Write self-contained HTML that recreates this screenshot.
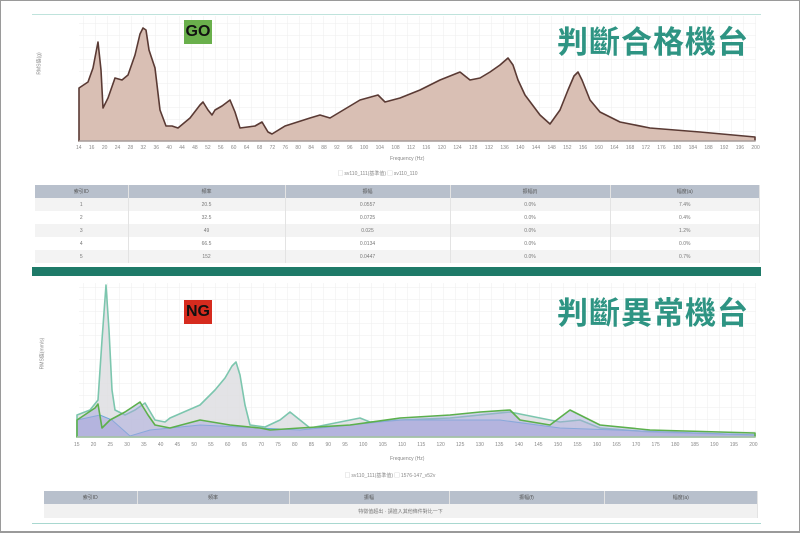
<!DOCTYPE html>
<html><head><meta charset="utf-8"><style>
*{margin:0;padding:0;box-sizing:border-box}
body{width:800px;height:533px;background:#fff;position:relative;overflow:hidden;font-family:"Liberation Sans","Noto Sans CJK TC",sans-serif}
.frame{position:absolute;left:0;top:0;width:800px;height:533px;border:1px solid #9a9a9a;border-bottom-width:2px}
.a{position:absolute}
.t{font-size:5px;color:#888;position:absolute;white-space:nowrap}
.ax{position:absolute;display:flex;justify-content:space-between;font-size:5px;color:#888}
.title{position:absolute;font-family:"Noto Sans CJK TC","WenQuanYi Zen Hei",sans-serif;font-weight:bold;color:#2e9483;font-size:31px;letter-spacing:1px;line-height:1}
.badge{position:absolute;width:28px;height:24px;font-weight:bold;font-size:16px;color:#111;text-align:center;line-height:24px}
table{position:absolute;border-collapse:collapse;font-size:5px;color:#777;text-align:center}
td,th{height:13px;font-weight:normal;border-right:1px solid #e3e3e3}
th{background:#b8c0cc;color:#555}
tr:nth-child(even) td{background:#f3f3f3}
</style></head><body>
<div class="a" style="left:32px;top:14px;width:729px;height:1px;background:#bfe3dc"></div>
<svg class="a" style="left:0;top:0" width="800" height="533">
<defs>
<pattern id="g" width="12" height="12" patternUnits="userSpaceOnUse"><path d="M12 0V12M0 12H12" stroke="#eeeeee" stroke-width="1" fill="none"/></pattern>
</defs>
<rect x="79" y="16" width="677" height="125" fill="url(#g)"/>
<path d="M79 88L88 82L93 68L98 42L101 70L103 108L108 98L115 78L122 80L128 75L135 55L140 34L143 28L146 30L149 50L155 68L160 110L166 126L172 126L178 128L190 118L200 105L203 102L208 110L212 115L215 110L222 106L230 100L235 112L240 128L255 126L262 122L268 132L272 134L285 126L310 118L320 115L330 118L360 100L378 95L385 102L400 98L420 90L440 80L460 72L470 80L480 78L490 72L500 65L508 58L513 65L518 80L525 95L540 115L550 124L560 110L568 90L574 76L578 72L582 80L590 100L600 112L620 122L650 128L700 132L755 137L755 141L79 141Z" fill="#d9bfb4" stroke="#5a3a34" stroke-width="1.6" stroke-linejoin="round"/>
<line x1="79" y1="141" x2="756" y2="141" stroke="#ccc"/>
<rect x="79" y="283" width="677" height="154" fill="url(#g)"/>
<path d="M77 415L90 410L98 400L102 340L106 285L109 330L112 390L115 410L125 415L135 410L145 403L155 420L165 422L170 418L200 405L215 390L225 378L232 366L236 362L240 375L245 405L250 425L265 427L280 420L290 412L300 420L310 428L350 420L360 418L370 422L400 420L450 418L510 412L560 422L580 420L600 428L650 432L755 435L755 437L77 437Z" fill="#dcdce0" fill-opacity=".8" stroke="#7cc6ae" stroke-width="1.6" stroke-linejoin="round"/>
<path d="M77 420L100 415L112 420L130 436L150 430L200 425L300 430L400 420L500 420L560 428L755 435L755 437L77 437Z" fill="#a8a8dc" fill-opacity=".6" stroke="#6aa8d8" stroke-width="1"/>
<path d="M77 420L95 408L98 404L102 428L110 420L125 412L140 402L148 415L155 425L170 428L200 420L230 425L260 428L270 430L300 428L350 425L400 418L450 415L480 412L510 410L520 420L550 425L570 410L580 415L600 425L650 430L755 433L755 437L77 437Z" fill="#a8a8dc" fill-opacity=".5" stroke="#5cb04c" stroke-width="1.6" stroke-linejoin="round"/>
<line x1="77" y1="437" x2="756" y2="437" stroke="#ccc"/>
</svg>
<div class="t" style="left:28px;top:60px;transform:rotate(-90deg)">RMS值(g)</div>
<div class="t" style="left:26px;top:350px;transform:rotate(-90deg)">RMS值(mm/s)</div>
<div class="ax" style="left:76px;top:145px;width:684px"><span>14</span><span>16</span><span>20</span><span>24</span><span>28</span><span>32</span><span>36</span><span>40</span><span>44</span><span>48</span><span>52</span><span>56</span><span>60</span><span>64</span><span>68</span><span>72</span><span>76</span><span>80</span><span>84</span><span>88</span><span>92</span><span>96</span><span>100</span><span>104</span><span>108</span><span>112</span><span>116</span><span>120</span><span>124</span><span>128</span><span>132</span><span>136</span><span>140</span><span>144</span><span>148</span><span>152</span><span>156</span><span>160</span><span>164</span><span>168</span><span>172</span><span>176</span><span>180</span><span>184</span><span>188</span><span>192</span><span>196</span><span>200</span></div>
<div class="t" style="left:390px;top:156px">Frequency (Hz)</div>
<div class="t" style="left:338px;top:170px">▢ sv110_111(基準值) ▢ sv110_110</div>
<div class="ax" style="left:74px;top:442px;width:684px"><span>15</span><span>20</span><span>25</span><span>30</span><span>35</span><span>40</span><span>45</span><span>50</span><span>55</span><span>60</span><span>65</span><span>70</span><span>75</span><span>80</span><span>85</span><span>90</span><span>95</span><span>100</span><span>105</span><span>110</span><span>115</span><span>120</span><span>125</span><span>130</span><span>135</span><span>140</span><span>145</span><span>150</span><span>155</span><span>160</span><span>165</span><span>170</span><span>175</span><span>180</span><span>185</span><span>190</span><span>195</span><span>200</span></div>
<div class="t" style="left:390px;top:456px">Frequency (Hz)</div>
<div class="t" style="left:345px;top:472px">▢ sv110_111(基準值) ▢ 1576-147_v52v</div>
<div class="title" style="left:557px;top:24px">判斷合格機台</div>
<div class="title" style="left:557px;top:295px">判斷異常機台</div>
<div class="badge" style="left:184px;top:20px;background:#6ab04c">GO</div>
<div class="badge" style="left:184px;top:300px;background:#d62b1e">NG</div>
<table style="left:35px;top:185px;width:725px">
<tr><th style="width:93px">索引ID</th><th style="width:157px">頻率</th><th style="width:165px">振幅</th><th style="width:160px">振幅(f)</th><th>幅度(a)</th></tr>
<tr><td>1</td><td>20.5</td><td>0.0557</td><td>0.0%</td><td>7.4%</td></tr>
<tr><td>2</td><td>32.5</td><td>0.0725</td><td>0.0%</td><td>0.4%</td></tr>
<tr><td>3</td><td>49</td><td>0.025</td><td>0.0%</td><td>1.2%</td></tr>
<tr><td>4</td><td>66.5</td><td>0.0134</td><td>0.0%</td><td>0.0%</td></tr>
<tr><td>5</td><td>152</td><td>0.0447</td><td>0.0%</td><td>0.7%</td></tr>
</table>
<div class="a" style="left:32px;top:267px;width:729px;height:9px;background:#1e7a68"></div>
<table style="left:44px;top:491px;width:714px">
<tr><th style="width:93px">索引ID</th><th style="width:152px">頻率</th><th style="width:160px">振幅</th><th style="width:155px">振幅(f)</th><th>幅度(a)</th></tr>
<tr><td colspan="5" style="background:#f1f1f1;height:14px">特徵值超出 · 請進入其他條件對比一下</td></tr>
</table>
<div class="a" style="left:32px;top:523px;width:729px;height:1px;background:#a8d8d0"></div>
<div class="frame"></div>
</body></html>
